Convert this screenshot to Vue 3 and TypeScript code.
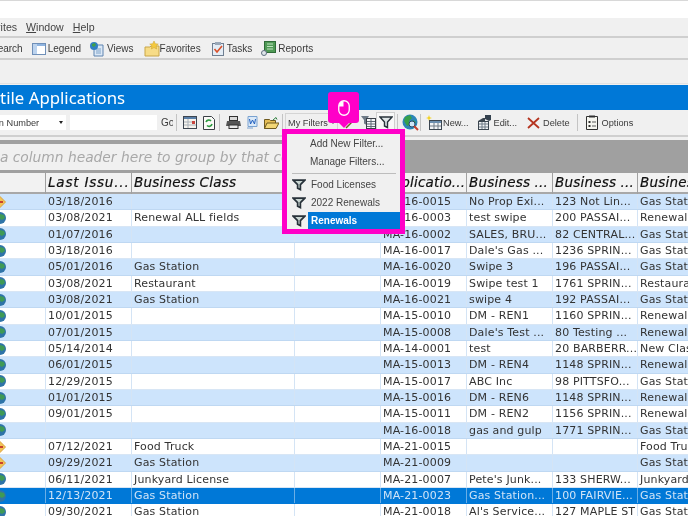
<script setup lang="ts">
type Mark = 'globe' | 'diamond';

interface Row {
    mark: Mark;
    issued: string;
    cls: string;
    number: string;
    name: string;
    address: string;
    type: string;
    selected?: boolean;
}

function row(mark: Mark, issued: string, cls: string, number: string, name: string, address: string, type: string, selected = false): Row {
    return { mark, issued, cls, number, name, address, type, selected };
}

const rows: Row[] = [
    row('diamond', '03/18/2016', '', 'MA-16-0015', 'No Prop Exi...', '123 Not Lin...', 'Gas Station'),
    row('globe', '03/08/2021', 'Renewal ALL fields', 'MA-16-0003', 'test swipe', '200 PASSAI...', 'Renewal'),
    row('globe', '01/07/2016', '', 'MA-16-0002', 'SALES, BRU...', '82 CENTRAL...', 'Gas Station'),
    row('globe', '03/18/2016', '', 'MA-16-0017', "Dale's Gas ...", '1236 SPRIN...', 'Gas Station'),
    row('globe', '05/01/2016', 'Gas Station', 'MA-16-0020', 'Swipe 3', '196 PASSAI...', 'Gas Station'),
    row('globe', '03/08/2021', 'Restaurant', 'MA-16-0019', 'Swipe test 1', '1761 SPRIN...', 'Restaurant'),
    row('globe', '03/08/2021', 'Gas Station', 'MA-16-0021', 'swipe 4', '192 PASSAI...', 'Gas Station'),
    row('globe', '10/01/2015', '', 'MA-15-0010', 'DM - REN1', '1160 SPRIN...', 'Renewal'),
    row('globe', '07/01/2015', '', 'MA-15-0008', "Dale's Test ...", '80 Testing ...', 'Renewal'),
    row('globe', '05/14/2014', '', 'MA-14-0001', 'test', '20 BARBERR...', 'New Class'),
    row('globe', '06/01/2015', '', 'MA-15-0013', 'DM - REN4', '1148 SPRIN...', 'Renewal'),
    row('globe', '12/29/2015', '', 'MA-15-0017', 'ABC Inc', '98 PITTSFO...', 'Gas Station'),
    row('globe', '01/01/2015', '', 'MA-15-0016', 'DM - REN6', '1148 SPRIN...', 'Renewal'),
    row('globe', '09/01/2015', '', 'MA-15-0011', 'DM - REN2', '1156 SPRIN...', 'Renewal'),
    row('globe', '', '', 'MA-16-0018', 'gas and gulp', '1771 SPRIN...', 'Gas Station'),
    row('diamond', '07/12/2021', 'Food Truck', 'MA-21-0015', '', '', 'Food Truck'),
    row('diamond', '09/29/2021', 'Gas Station', 'MA-21-0009', '', '', 'Gas Station'),
    row('globe', '06/11/2021', 'Junkyard License', 'MA-21-0007', "Pete's Junk...", '133 SHERW...', 'Junkyard'),
    row('globe', '12/13/2021', 'Gas Station', 'MA-21-0023', 'Gas Station...', '100 FAIRVIE...', 'Gas Station', true),
    row('globe', '09/30/2021', 'Gas Station', 'MA-21-0018', "Al's Service...", '127 MAPLE ST', 'Gas Station'),
];

const headers = ['', 'Last Issu...', 'Business Class', '', 'Applicatio...', 'Business ...', 'Business ...', 'Business'];
const filters = ['Food Licenses', '2022 Renewals', 'Renewals'];
</script>

<template>
    <div class="screen">
        <div class="titlebar"></div>

        <div class="menubar">
            <span class="clip-menu">Favorites</span>
            <span><u>W</u>indow</span>
            <span><u>H</u>elp</span>
        </div>

        <div class="mainbar">
            <span class="clip-search">Search</span>
            <span class="tool legend">
                <svg width="14" height="14" viewBox="0 0 14 14">
                    <rect x="0.5" y="1.5" width="13" height="11" fill="#fff" stroke="#6f8fb8" />
                    <rect x="1" y="2" width="12" height="2" fill="#8fb4e0" />
                    <rect x="1" y="2" width="4" height="10" fill="#bcd3ee" />
                </svg>
                Legend
            </span>
            <span class="tool views">
                <svg width="16" height="16" viewBox="0 0 16 16">
                    <path d="M5 4h9v11H5z" fill="#dbe8f6" stroke="#5f84b0" />
                    <path d="M7 8h5M7 10h5M7 12h5" stroke="#7fa2c8" />
                    <circle cx="5" cy="5" r="4" fill="#2f7fc4" />
                    <path d="M3 3l3-1 1 2-2 2-2-1z" fill="#3f9f4a" />
                </svg>
                Views
            </span>
            <span class="tool favorites">
                <svg width="16" height="16" viewBox="0 0 16 16">
                    <path d="M1 6h5l1-1h8v10H1z" fill="#f7dc87" stroke="#c9a648" />
                    <path d="M10 0l1.3 2.7 3 .4-2.2 2 .6 2.9-2.7-1.4-2.7 1.4.6-2.9-2.2-2 3-.4z" fill="#f4c93f" stroke="#c9a030" stroke-width="0.5" />
                </svg>
                Favorites
            </span>
            <span class="tool tasks">
                <svg width="14" height="15" viewBox="0 0 14 15">
                    <rect x="1.5" y="2.5" width="11" height="12" fill="#e4edf6" stroke="#6f7f92" />
                    <rect x="4" y="1" width="6" height="3" fill="#9aa8b8" />
                    <path d="M3.5 8l2.5 3 5-6" fill="none" stroke="#d9502a" stroke-width="1.6" />
                </svg>
                Tasks
            </span>
            <span class="tool reports">
                <svg width="15" height="15" viewBox="0 0 15 15">
                    <rect x="3.5" y="0.5" width="11" height="11" fill="#4f9a55" stroke="#2f6b38" />
                    <path d="M6 3h6M6 5.5h6M6 8h6" stroke="#bfe3c0" />
                    <circle cx="3" cy="12" r="2.5" fill="#dfe5ea" stroke="#5f6f7f" />
                </svg>
                Reports
            </span>
        </div>

        <div class="blankbar"></div>

        <div class="title"><span>Mercantile Applications</span></div>

        <div class="gridbar">
            <div class="search-type">
                <span>Application Number</span>
                <i class="caret"></i>
            </div>
            <div class="search-input"></div>
            <span class="go">Go</span>
            <i class="sep"></i>
            <svg class="ico cal" width="14" height="13" viewBox="0 0 14 13">
                <rect x="0.5" y="0.5" width="13" height="12" fill="#f6f4ee" stroke="#3e4650" />
                <rect x="1" y="1" width="12" height="2" fill="#5a7fa8" />
                <rect x="9" y="5" width="3" height="3" fill="#c8453e" />
                <path d="M1 6h8M1 9h12M5 3v9" stroke="#a9b0b8" />
            </svg>
            <svg class="ico cal" width="12" height="14" viewBox="0 0 12 14">
                <path d="M.5.5h8l3 3v10H.5z" fill="#fbfbf8" stroke="#3a3f45" />
                <path d="M3 6a3 3 0 0 1 5-1M9 8a3 3 0 0 1-5 1.5" fill="none" stroke="#2c9a3f" stroke-width="1.6" />
            </svg>
            <i class="sep s2"></i>
            <svg class="ico cal" width="15" height="13" viewBox="0 0 15 13">
                <rect x="3.5" y="0.5" width="8" height="4" fill="#d9d9d9" stroke="#303030" />
                <path d="M1 5h13l1 5H0z" fill="#555" />
                <rect x="3" y="9" width="9" height="3.5" fill="#e8e8e8" stroke="#303030" />
            </svg>
            <svg class="ico cal" width="11" height="13" viewBox="0 0 11 13">
                <path d="M1 .5h9v10H1z" fill="#dbe9f8" stroke="#7aa2d0" />
                <path d="M2.5 3l1 5 2-4 2 4 1-5" fill="none" stroke="#1f5fbf" />
                <path d="M0 12h6" stroke="#7aa2d0" />
            </svg>
            <svg class="ico cal" width="15" height="12" viewBox="0 0 15 12">
                <path d="M.5 2.5h5l1 1h5v8h-11z" fill="#e6be55" stroke="#6f5a20" />
                <path d="M3 6h12l-3 5.500H.5z" fill="#f3d776" stroke="#6f5a20" />
                <path d="M9 3l3-2.500 1 2" fill="none" stroke="#2f7f3f" />
            </svg>
            <i class="sep"></i>
            <div class="filters">
                <span>My Filters</span>
                <i class="caret"></i>
            </div>
            <svg class="ico wand" width="12" height="12" viewBox="0 0 12 12">
                <path d="M1 11l6-6" stroke="#6a5a20" stroke-width="1.500" />
                <path d="M9 0l.8 2 2 .6-2 .8L9 5.500 8.200 3.400l-2-.8 2-.6z" fill="#f2c81e" />
            </svg>
            <svg class="ico table" width="15" height="13" viewBox="0 0 15 13">
                <path d="M0 0h8L5.500 4v5L3 7.500V4z" fill="#6e7a86" />
                <rect x="5.500" y="2.500" width="9" height="10" fill="#f4f6f8" stroke="#3a4048" />
                <path d="M6 5.500h8M6 8h8M6 10.500h8M10 3v9" stroke="#5f6a76" />
            </svg>
            <span class="filter-toggle">
                <svg width="14" height="13" viewBox="0 0 14 13">
                    <path d="M1 1h12L8.500 6v5.500L5.500 10V6z" fill="#dfe6e8" stroke="#28323a" stroke-width="1.400" />
                </svg>
            </span>
            <i class="sep s3"></i>
            <svg class="ico earth" width="17" height="17" viewBox="0 0 17 17">
                <circle cx="8" cy="8" r="7.500" fill="#2c85b8" />
                <path d="M3 3l5-2 2 3-3 3 1 4-3 1-3-5z" fill="#37a04a" />
                <path d="M11 6l3 2-2 3-2-2z" fill="#37a04a" />
                <circle cx="10" cy="10" r="3" fill="#cfe6f7" stroke="#27496b" />
                <path d="M12 12l4 4" stroke="#c8402e" stroke-width="2" />
            </svg>
            <i class="sep s4"></i>
            <span class="tool-b new">
                <svg width="16" height="15" viewBox="0 0 16 15">
                    <path d="M3 0l.8 2.200L6 3l-2.200.8L3 6l-.8-2.200L0 3l2.200-.8z" fill="#f4d21f" />
                    <rect x="3.500" y="5.500" width="12" height="9" fill="#f2f4f6" stroke="#3c4650" />
                    <rect x="4" y="6" width="11" height="2" fill="#6c8fb0" />
                    <path d="M4 11h11M8 8v6M12 8v6" stroke="#6f7a86" />
                </svg>
                New...
            </span>
            <span class="tool-b edit">
                <svg width="13" height="15" viewBox="0 0 13 15">
                    <path d="M0 6l5-3h2v3z" fill="#3c4650" />
                    <rect x="0.500" y="6.500" width="10" height="8" fill="#f2f4f6" stroke="#3c4650" />
                    <path d="M1 9h9M1 12h9M4 7v7M7 7v7" stroke="#6f7a86" />
                    <path d="M7 0h6v5l-2 1-4-2z" fill="#34414e" />
                </svg>
                Edit...
            </span>
            <span class="tool-b del">
                <svg width="13" height="12" viewBox="0 0 13 12">
                    <path d="M1 1l11 10M12 1L1 11" stroke="#b5341f" stroke-width="1.800" />
                </svg>
                Delete
            </span>
            <i class="sep s5"></i>
            <span class="tool-b options">
                <svg width="12" height="15" viewBox="0 0 12 15">
                    <path d="M.5 1.500h11v13H.5z" fill="#f6f6f0" stroke="#303030" />
                    <path d="M3 .5h6v2H3z" fill="#303030" />
                    <path d="M2.500 6h2v2h-2zM2.500 10h2v2h-2z" fill="#303030" />
                    <path d="M6 7h4M6 11h4" stroke="#5a5a5a" />
                </svg>
                Options
            </span>
        </div>

        <div class="groupbar">
            <div class="group-hint"><span>Drag a column header here to group by that column</span></div>
        </div>

        <div class="grid">
            <div class="head">
                <div v-for="(h, i) in headers" :key="i" class="hcell">{{ h }}</div>
            </div>
            <div v-for="r in rows" :key="r.number" class="row" :class="{ selected: r.selected }">
                <div class="cell mark">
                    <svg v-if="r.mark === 'globe'" width="12" height="12" viewBox="0 0 12 12">
                        <circle cx="0" cy="6" r="6" fill="#2f74a8" />
                        <path d="M0 2l4 1 1 3-3 2-2-1z" fill="#3f9a55" />
                    </svg>
                    <svg v-else width="12" height="12" viewBox="0 0 12 12">
                        <path d="M0 .5l5.500 5.500L0 11.500-5.500 6z" fill="#f2c454" stroke="#d9a040" />
                        <path d="M0 5h3v2H0z" fill="#c8402e" />
                    </svg>
                </div>
                <div class="cell">{{ r.issued }}</div>
                <div class="cell wide-cell">{{ r.cls }}</div>
                <div class="cell"></div>
                <div class="cell">{{ r.number }}</div>
                <div class="cell">{{ r.name }}</div>
                <div class="cell">{{ r.address }}</div>
                <div class="cell">{{ r.type }}</div>
            </div>
        </div>

        <!-- callout over the toolbar -->
        <div class="callout">
            <svg width="12" height="16" viewBox="0 0 12 16">
                <rect x="0.750" y="0.750" width="10.500" height="14.500" rx="5.250" fill="none" stroke="#fff" stroke-width="1.300" />
                <path d="M1 6.500h4.500V1A5 5 0 0 0 1 6z" fill="#fff" />
            </svg>
        </div>

        <div class="menu-frame">
            <div class="menu">
                <div class="item">Add New Filter...</div>
                <div class="item">Manage Filters...</div>
                <div class="rule"></div>
                <div v-for="(f, i) in filters" :key="f" class="item filter-item" :class="{ active: i === 2 }">
                    <span class="gutter">
                        <svg width="14" height="12" viewBox="0 0 14 12">
                            <path d="M1.200 1.200h11.600L8.400 5.600v5L5.600 9.200V5.600z" fill="#c9d6d2" stroke="#28323a" stroke-width="1.700" />
                        </svg>
                    </span>
                    <span class="label">{{ f }}</span>
                </div>
            </div>
        </div>
    </div>
</template>

<style>
html,
body {
    margin: 0;
    background: #f0f0f0;
}
</style>

<style scoped>
.screen {
    position: relative;
    width: 688px;
    height: 516px;
    overflow: hidden;
    background: #f0f0f0;
    color: #3a3a3a;
    font: 10px "Liberation Sans", Arial, sans-serif;
    filter: blur(0.35px);
}

.titlebar {
    height: 17px;
    background: #fff;
    border-top: 1px solid #d8d8d8;
}

.menubar {
    display: flex;
    align-items: center;
    gap: 9px;
    height: 18px;
    font-size: 10.6px;
    border-bottom: 2px solid #cfcfcf;
    color: #444;
    overflow: hidden;
}

.clip-menu {
    margin-left: -26.500px;
}

.mainbar {
    display: flex;
    align-items: center;
    height: 19px;
    padding-top: 1px;
    border-bottom: 2px solid #cfcfcf;
    overflow: hidden;
    white-space: nowrap;
}

.clip-search {
    margin-left: -9px;
}

.tool {
    display: inline-flex;
    align-items: center;
    gap: 2px;
}

.legend {
    margin-left: 9px;
}

.views {
    margin-left: 8px;
}

.favorites {
    margin-left: 10px;
    gap: 0;
}

.tasks {
    margin-left: 10px;
}

.reports {
    margin-left: 9px;
}

.blankbar {
    height: 23px;
    border-bottom: 1px solid #e2e2e2;
}

.title {
    height: 25px;
    margin-top: 1px;
    background: #0078d7;
    color: #fff;
    font: 16.800px/25px "Noto Sans", sans-serif;
    white-space: nowrap;
    overflow: hidden;
}

.title span {
    margin-left: -59px;
}

.gridbar {
    display: flex;
    align-items: center;
    height: 25px;
    border-bottom: 2px solid #cfcfcf;
    overflow: hidden;
    font-size: 9.200px;
    white-space: nowrap;
}

.search-type {
    display: flex;
    align-items: center;
    justify-content: space-between;
    flex: none;
    width: 66px;
    height: 15px;
    padding-right: 3px;
    background: #fff;
    box-sizing: border-box;
    overflow: hidden;
}

.search-type span {
    margin-left: -41px;
}

.caret {
    flex: none;
    width: 0;
    height: 0;
    border-left: 2.500px solid transparent;
    border-right: 2.500px solid transparent;
    border-top: 3px solid #222;
}

.search-input {
    flex: none;
    width: 87px;
    height: 15px;
    margin-left: 4px;
    background: #fff;
}

.go {
    flex: none;
    margin-left: 4px;
    width: 12px;
    overflow: hidden;
    font-size: 10px;
}

.sep {
    flex: none;
    width: 1px;
    height: 17px;
    margin-left: 3px;
    background: #c4c4c4;
}

.s2 {
    margin-left: 4px;
}

.s3 {
    margin-left: 2px;
}

.s4 {
    margin-left: 1px;
}

.s5 {
    margin-left: 7px;
}

.ico,
.tool-b svg {
    flex: none;
}

.cal {
    margin-left: 6px;
}

.filters {
    display: flex;
    align-items: center;
    gap: 3px;
    flex: none;
    width: 53px;
    height: 20px;
    margin-left: 2px;
    padding-left: 2px;
    box-sizing: border-box;
    border: 1px solid #d4d4d4;
}

.wand {
    margin-left: 7px;
}

.table {
    margin-left: 4px;
}

.filter-toggle {
    display: flex;
    align-items: center;
    justify-content: center;
    flex: none;
    width: 17px;
    height: 19px;
    border: 1px solid #cfcfcf;
    background: #f8f8f8;
}

.earth {
    margin-left: 4px;
}

.tool-b {
    display: inline-flex;
    align-items: center;
    flex: none;
}

.new {
    margin-left: 5px;
    gap: 1px;
}

.edit {
    margin-left: 9px;
    gap: 3px;
}

.del {
    margin-left: 10px;
    gap: 3px;
}

.options {
    margin-left: 8px;
    gap: 4px;
}

.groupbar {
    height: 33px;
    margin-top: 3px;
    padding-top: 4px;
    box-sizing: border-box;
    background: #a0a0a0;
}

.group-hint {
    width: 285px;
    height: 26px;
    background: #f0f0f0;
    color: #a8a8a8;
    font: italic 13.800px/26px "DejaVu Sans", sans-serif;
    white-space: nowrap;
    overflow: hidden;
}

.group-hint span {
    margin-left: -38px;
}

.head,
.row {
    display: grid;
    grid-template-columns: 46px 86px 163px 86px 86px 86px 85px 60px;
}

.head {
    height: 21px;
    background: #a0a0a0;
}

.hcell {
    box-sizing: border-box;
    margin-right: 1px;
    padding-left: 2px;
    background: #f2f2f2;
    border-bottom: 2px solid #a8a8a8;
    color: #111;
    font: italic 13.500px/19px "DejaVu Sans", sans-serif;
    letter-spacing: 0.200px;
    -webkit-text-stroke: 0.200px #111;
    white-space: nowrap;
    overflow: hidden;
}

.hcell:nth-child(2) {
    letter-spacing: 0.800px;
}

.row {
    height: 16.330px;
    box-sizing: border-box;
    background: #fff;
    color: #333;
    font: 11px/15px "DejaVu Sans", sans-serif;
    letter-spacing: 0.150px;
    border-bottom: 1px solid #d8e6f5;
}

.row:nth-child(even) {
    background: #cde4fc;
    border-bottom-color: #bfd8f2;
}

.row.selected {
    background: #0078d7;
    color: #cfe4f7;
    border-bottom-color: #0078d7;
}

.cell {
    padding-left: 2px;
    border-right: 1px solid #d4e4f5;
    white-space: nowrap;
    overflow: hidden;
}

.row.selected .cell {
    border-right-color: #6aaee6;
}

.mark {
    padding-left: 0;
    display: flex;
    align-items: center;
}

.callout {
    position: absolute;
    left: 328px;
    top: 92px;
    display: flex;
    align-items: center;
    justify-content: center;
    width: 31px;
    height: 31px;
    border-radius: 3px;
    background: #ff00c8;
}

.callout::after {
    content: "";
    position: absolute;
    left: 11px;
    bottom: -5px;
    border-left: 5px solid transparent;
    border-right: 5px solid transparent;
    border-top: 5px solid #ff00c8;
}

.menu-frame {
    position: absolute;
    left: 282px;
    top: 129px;
    width: 123px;
    height: 105px;
    box-sizing: border-box;
    border: 5px solid #ff00c8;
}

.menu {
    height: 100%;
    padding: 1px 0 0 3px;
    box-sizing: border-box;
    overflow: hidden;
    background: #f0f0f0;
    color: #444;
    font: 10px "Liberation Sans", Arial, sans-serif;
}

.item {
    height: 18px;
    padding-left: 20px;
    line-height: 18px;
}

.rule {
    height: 1px;
    margin: 2px 4px 2px 2px;
    background: #bdbdbd;
}

.filter-item {
    display: flex;
    padding-left: 0;
}

.gutter {
    display: flex;
    align-items: center;
    justify-content: center;
    flex: none;
    width: 17px;
    height: 17px;
    margin-right: 1px;
    background: #f0f0f0;
}

.filter-item .label {
    flex: 1;
    padding-left: 3px;
}

.filter-item.active .label {
    background: #0078d7;
    color: #fff;
    font-weight: 700;
}
</style>
